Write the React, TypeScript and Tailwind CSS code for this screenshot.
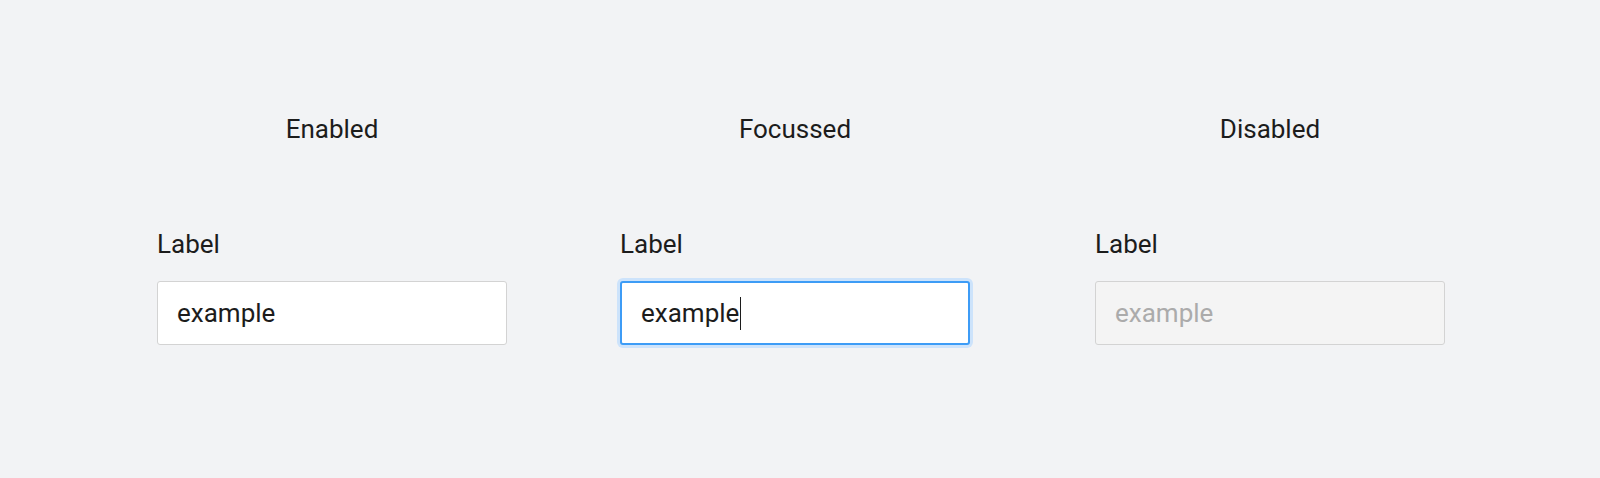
import React from 'react'

// ─── TIPOS ───────────────────────────────────────────────────────────────────

type State = 'enabled' | 'focussed' | 'disabled'

interface Column {
  key: State
  title: string
  offset: string
}

const columns: Column[] = [
  { key: 'enabled', title: 'Enabled', offset: '' },
  { key: 'focussed', title: 'Focussed', offset: 'ml-[113px]' },
  { key: 'disabled', title: 'Disabled', offset: 'ml-[125px]' },
]

// ─── FIELD ───────────────────────────────────────────────────────────────────

function Field({ state }: { state: State }) {
  if (state === 'focussed') {
    return (
      <div className="h-[64px] w-[350px] flex items-center rounded-[3px] border-2 border-[#3d9cf6] bg-white pl-[19px] shadow-[0_0_0_3px_#cde3fb]">
        <span className="text-[26px] leading-none text-[#1c1c1c]">example</span>
        <span className="ml-px h-[33px] w-px bg-[#1c1c1c]" />
      </div>
    )
  }

  const disabled = state === 'disabled'

  return (
    <input
      defaultValue="example"
      disabled={disabled}
      className={
        disabled
          ? 'h-[64px] w-[350px] rounded-[3px] border border-[#d3d3d3] bg-[#f4f4f4] px-[19px] text-[26px] text-[#ababab] outline-none'
          : 'h-[64px] w-[350px] rounded-[3px] border border-[#d3d3d3] bg-white px-[19px] text-[26px] text-[#1c1c1c] outline-none'
      }
    />
  )
}

// ─── PAGE ─────────────────────────────────────────────────────────────────────

export default function App() {
  return (
    <div className="h-[478px] w-[1600px] bg-[#f2f3f5] font-['Roboto','Noto_Sans',sans-serif] text-[#1c1c1c]">
      <div className="flex pl-[157px] pt-[110px]">
        {columns.map((col) => (
          <div key={col.key} className={`flex w-[350px] flex-col ${col.offset}`}>
            <p className="text-center text-[26px] leading-[39px]">{col.title}</p>
            <p className="mt-[76px] text-[26px] leading-[39px]">Label</p>
            <div className="mt-[17px]">
              <Field state={col.key} />
            </div>
          </div>
        ))}
      </div>
    </div>
  )
}
